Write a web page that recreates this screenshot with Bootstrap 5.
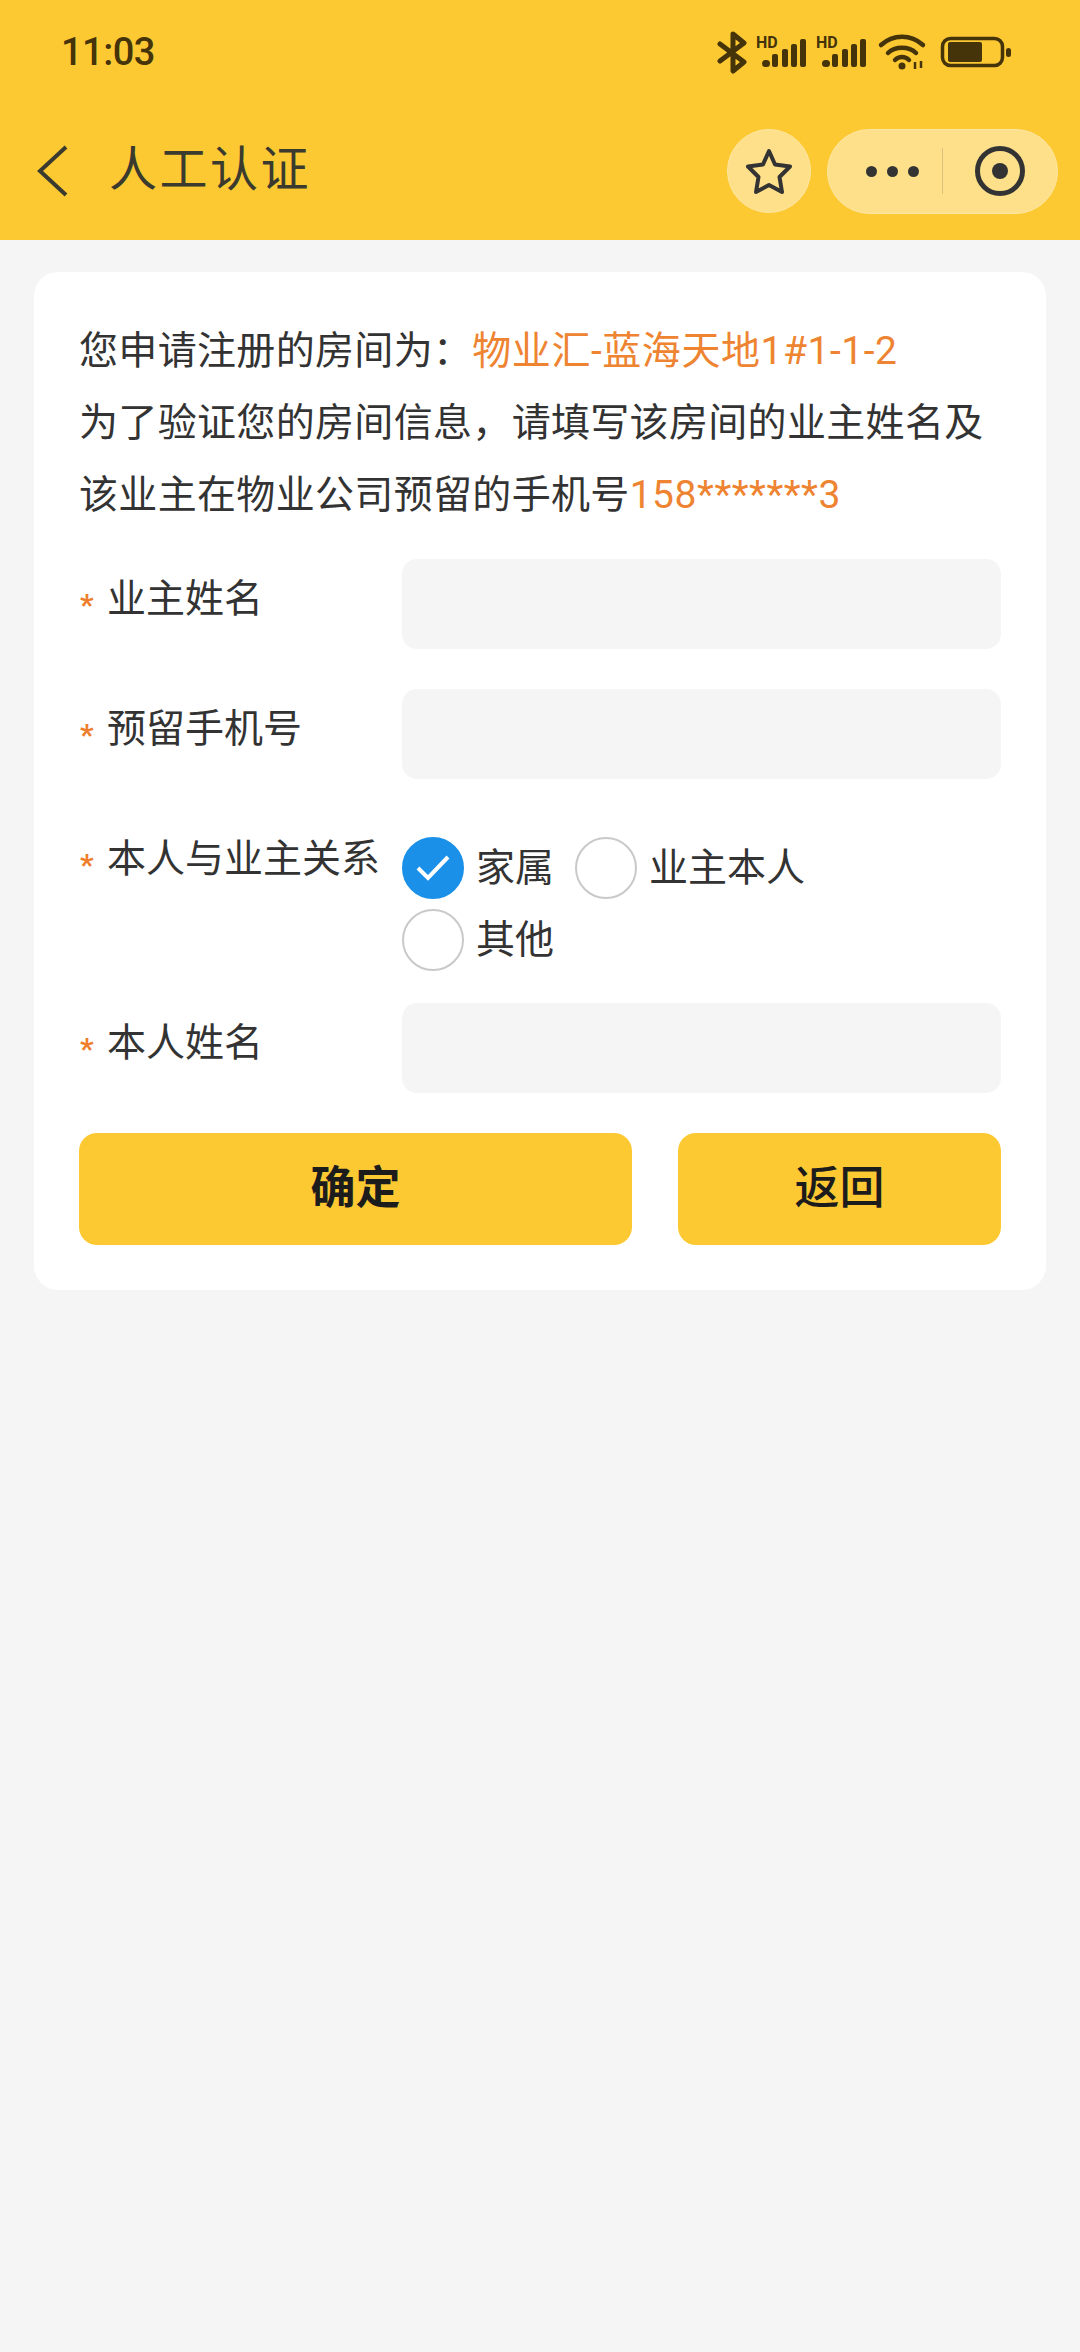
<!DOCTYPE html>
<html lang="zh-CN">
<head>
    <meta charset="UTF-8">
    <meta name="viewport" content="width=device-width, initial-scale=1.0">
    <link href="https://cdn.jsdelivr.net/npm/bootstrap@5.3.3/dist/css/bootstrap.min.css" rel="stylesheet" crossorigin="anonymous">
    <title>人工认证</title>
    <style>
        body { background: #f5f5f5; font-family: Roboto, "Noto Sans CJK SC", sans-serif; color: #333; width: 1080px; min-height: 2352px; }
        .top-area { background: #fcc933; height: 240px; }
        .status-row { height: 105px; padding: 0 67px 0 61px; color: #453309; }
        .clock { font-size: 38px; font-weight: 500; letter-spacing: -.5px; }
        .title-row { height: 132px; padding-left: 37px; padding-right: 22px; }
        .page-title { font-size: 48px; margin-left: 40px; padding-bottom: 2px; color: #3a3a2e; letter-spacing: 2.5px; line-height: 1; }
        .star-btn { width: 84px; height: 84px; background: #fee08a; border: 1px solid #fee7a4; margin-right: 16px; }
        .capsule { width: 231px; height: 85px; background: #fee08a; border: 1px solid #fee7a4; border-radius: 43px; }
        .cap-left { width: 114px; padding-left: 14px; gap: 10px; }
        .cap-sep { width: 1px; height: 46px; background: #d9c27c; }
        .cap-right { width: 114px; }
        .dot-item { width: 11px; height: 11px; background: #333; }
        .info-card { margin: 32px 34px 0; background: #fff; border-radius: 24px; padding: 43px 45px 45px; height: 1018px; }
        .intro-text { font-size: 39px; line-height: 72px; margin-bottom: 0; color: #333; white-space: nowrap; letter-spacing: .33px; }
        .intro-last { margin-bottom: 28px; }
        .hl { color: #ee8431; letter-spacing: .55px; }
        .form-line { min-height: 90px; margin-bottom: 40px; }
        .form-line.radio-form { margin-bottom: 22px; }
        .field-label { width: 323px; font-size: 39px; line-height: 50px; padding-top: 15px; white-space: nowrap; flex-shrink: 0; }
        .req { display: inline-block; width: 28px; padding-left: 1px; color: #ee7d2c; font-size: 30px; font-weight: 700; line-height: 1; vertical-align: -3px; }
        .field-box { width: 599px; height: 90px; background: #f5f5f5; border: 0; border-radius: 15px; }
        .radio-wrap { width: 599px; padding-top: 18px; }
        .radio-line { height: 62px; margin-bottom: 10px; }
        .radio-circle { width: 62px; height: 62px; border: 2px solid #c9c9c9; background: #fff; margin-right: 12px; }
        .radio-circle.on { background: #1a90e8; border-color: #1a90e8; }
        .radio-name { margin-right: 5px; font-size: 39px; line-height: 62px; }
        .act-btn { height: 112px; background: #fcc933; border: 0; border-radius: 18px; font-size: 45px; color: #1c1c1c; padding: 0; }
        .act-btn:hover { background: #fcc933; color: #1c1c1c; }
        .act-main { width: 553px; font-weight: 700; margin-right: 46px; }
        .act-back { width: 323px; font-weight: 500; }
    </style>
</head>
<body>
    <div class="top-area">
        <div class="status-row d-flex align-items-center justify-content-between">
            <span class="clock">11:03</span>
            <svg width="296" height="44" viewBox="0 0 296 44" fill="#453309">
                <!-- bluetooth -->
                <path d="M3 13 L27 31 L16 40 V3 L27 12 L3 30" fill="none" stroke="#453309" stroke-width="5" stroke-linecap="round" stroke-linejoin="round"/>
                <!-- signal 1 -->
                <text x="39" y="17" font-family="Roboto" font-weight="700" font-size="16">HD</text>
                <rect x="45" y="29" width="8" height="7" rx="3.500"/><rect x="55" y="23" width="6" height="13" rx="2"/><rect x="65" y="18" width="6" height="18" rx="2"/><rect x="74" y="13" width="6" height="23" rx="2"/><rect x="83" y="8" width="6" height="28" rx="2"/>
                <!-- signal 2 -->
                <text x="99" y="17" font-family="Roboto" font-weight="700" font-size="16">HD</text>
                <rect x="105" y="29" width="8" height="7" rx="3.500"/><rect x="115" y="23" width="6" height="13" rx="2"/><rect x="125" y="18" width="6" height="18" rx="2"/><rect x="134" y="13" width="6" height="23" rx="2"/><rect x="143" y="8" width="6" height="28" rx="2"/>
                <!-- wifi -->
                <g fill="none" stroke="#453309" stroke-width="4.500" stroke-linecap="round">
                    <path d="M164 14 C176 3 194 3 206 14"/><path d="M171 22 C178 15 192 15 199 22"/><path d="M178 29 C182 25 188 25 192 29"/>
                </g>
                <circle cx="185" cy="35" r="3.500"/>
                <path d="M198 31 v7 M204 30 v7" stroke="#453309" stroke-width="2.500"/>
                <!-- battery -->
                <rect x="225.500" y="7.500" width="60" height="27" rx="8" fill="none" stroke="#453309" stroke-width="3.500"/>
                <rect x="231" y="11" width="34" height="20" rx="2"/>
                <rect x="289" y="17" width="5" height="9" rx="2.500"/>
            </svg>
        </div>
        <div class="title-row d-flex align-items-center">
            <svg width="32" height="52" viewBox="0 0 32 52" fill="none"><path d="M29 2 L3 26 L29 50" stroke="#3a3a2e" stroke-width="4"/></svg>
            <span class="page-title">人工认证</span>
            <div class="ms-auto d-flex align-items-center">
                <div class="star-btn rounded-circle d-flex align-items-center justify-content-center">
                    <svg width="48" height="48" viewBox="0 0 48 48" fill="none"><path d="M24 4 L30 17.500 L45 19.500 L34.500 30 L37 45 L24 38 L11 45 L13.500 30 L3 19.500 L18 17.500 Z" stroke="#333" stroke-width="4" stroke-linejoin="round"/></svg>
                </div>
                <div class="capsule d-flex align-items-center">
                    <div class="cap-left d-flex align-items-center justify-content-center">
                        <span class="dot-item rounded-circle"></span><span class="dot-item rounded-circle"></span><span class="dot-item rounded-circle"></span>
                    </div>
                    <div class="cap-sep"></div>
                    <div class="cap-right d-flex align-items-center justify-content-center">
                        <svg width="50" height="50" viewBox="0 0 50 50"><circle cx="25" cy="25" r="22.500" fill="none" stroke="#333" stroke-width="5"/><circle cx="25" cy="25" r="8" fill="#333"/></svg>
                    </div>
                </div>
            </div>
        </div>
    </div>

    <div class="info-card">
        <p class="intro-text">您申请注册的房间为：<span class="hl">物业汇-蓝海天地1#1-1-2</span></p>
        <p class="intro-text">为了验证您的房间信息，请填写该房间的业主姓名及</p>
        <p class="intro-text intro-last">该业主在物业公司预留的手机号<span class="hl">158*******3</span></p>

        <div class="form-line d-flex">
            <div class="field-label"><span class="req">*</span>业主姓名</div>
            <input class="field-box" type="text">
        </div>
        <div class="form-line d-flex">
            <div class="field-label"><span class="req">*</span>预留手机号</div>
            <input class="field-box" type="text">
        </div>
        <div class="form-line radio-form d-flex">
            <div class="field-label"><span class="req">*</span>本人与业主关系</div>
            <div class="radio-wrap">
                <div class="radio-line d-flex align-items-center">
                    <span class="radio-circle on rounded-circle d-flex align-items-center justify-content-center">
                        <svg width="34" height="28" viewBox="0 0 34 28" fill="none"><path d="M2 14 L12 24 L32 3" stroke="#fff" stroke-width="4"/></svg>
                    </span>
                    <span class="radio-name">家属</span>
                    <span class="radio-circle rounded-circle ms-3"></span>
                    <span class="radio-name">业主本人</span>
                </div>
                <div class="radio-line d-flex align-items-center">
                    <span class="radio-circle rounded-circle"></span>
                    <span class="radio-name">其他</span>
                </div>
            </div>
        </div>
        <div class="form-line d-flex">
            <div class="field-label"><span class="req">*</span>本人姓名</div>
            <input class="field-box" type="text">
        </div>
        <div class="d-flex">
            <button class="btn act-btn act-main">确定</button>
            <button class="btn act-btn act-back">返回</button>
        </div>
    </div>

    <script src="https://cdn.jsdelivr.net/npm/bootstrap@5.3.3/dist/js/bootstrap.bundle.min.js"></script>
</body>
</html>
